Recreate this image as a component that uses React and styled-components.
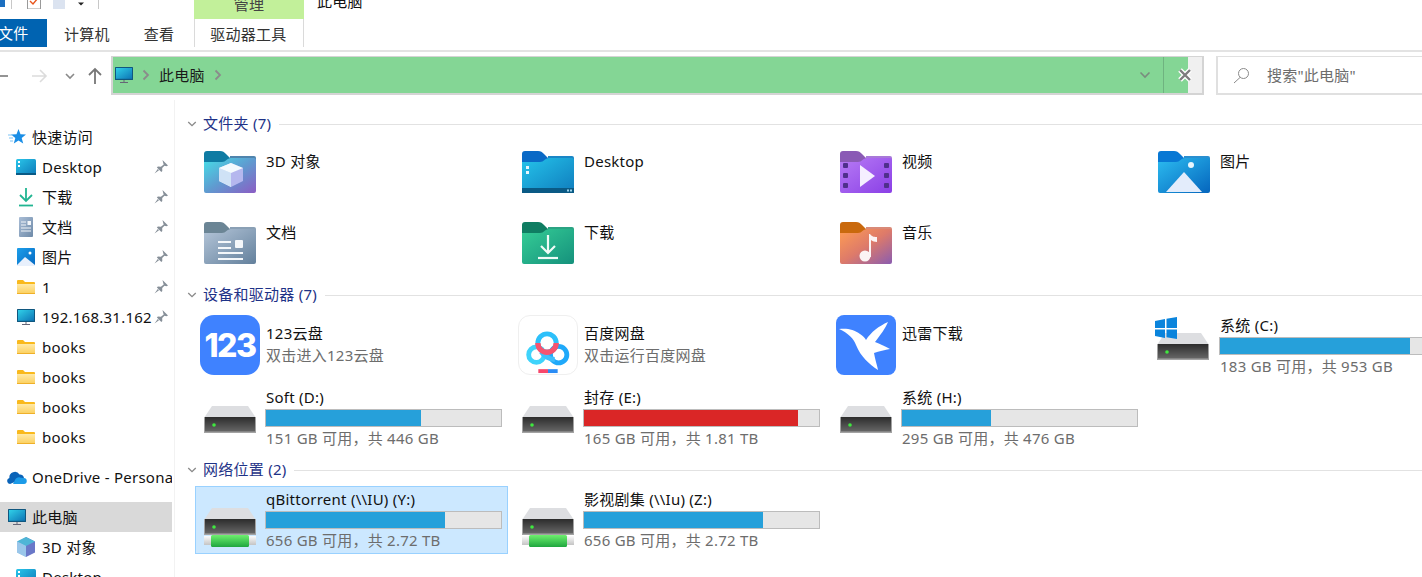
import React from "react";
import styled, { createGlobalStyle } from "styled-components";

const GlobalStyle = createGlobalStyle`
  html, body {
    margin: 0;
    padding: 0;
    background: #fff;
  }
  body {
    font-family: "Noto Sans", "Noto Sans CJK SC", sans-serif;
    font-size: 15px;
    letter-spacing: 0.25px;
    color: #111;
  }
`;

const Window = styled.div`
  width: 1422px;
  height: 577px;
  overflow: hidden;
  display: flex;
  flex-direction: column;
  background: #fff;
`;

/* ribbon */
const Ribbon = styled.div`
  height: 52px;
  flex: none;
  box-sizing: border-box;
  border-bottom: 2px solid #e3e3e3;
  display: flex;
  flex-direction: column;
`;

const TitleRow = styled.div`
  height: 19px;
  display: flex;
  align-items: flex-start;
  overflow: hidden;
`;

const QuickBar = styled.div`
  width: 194px;
  height: 9px;
  display: flex;
  align-items: flex-start;
`;

const ContextHead = styled.div`
  width: 110px;
  height: 19px;
  background: #c2f09a;
  color: #444;
  text-align: center;
  line-height: 20px;
  margin-right: 13px;
`;

const ContextLabel = styled.div`
  margin-top: -6px;
`;

const WindowTitle = styled.div`
  line-height: 20px;
  margin-top: -9px;
`;

const TabRow = styled.div`
  height: 28px;
  display: flex;
`;

const FileTab = styled.div`
  width: 47px;
  background: #0063b1;
  color: #fff;
  line-height: 28px;
  text-indent: -2px;
  overflow: hidden;
`;

const Tab = styled.div`
  padding: 0 17px;
  line-height: 30px;
  color: #333;
`;

const ContextTab = styled(Tab)`
  width: 110px;
  box-sizing: border-box;
  padding: 0 1px 0 0;
  margin-left: 2.5px;
  text-align: center;
  border-left: 1px solid #dadada;
  border-right: 1px solid #dadada;
`;

/* address row */
const AddressRow = styled.div`
  height: 48px;
  flex: none;
  display: flex;
  align-items: flex-start;
  padding-top: 4px;
  box-sizing: border-box;
`;

const NavButtons = styled.div`
  width: 111px;
  height: 39px;
  flex: none;
  display: flex;
  align-items: center;
`;

const AddressBar = styled.div`
  width: 1093px;
  height: 39px;
  flex: none;
  box-sizing: border-box;
  border: 2px solid #d4d4d4;
  border-top-width: 1px;
  background: linear-gradient(to right, #84d695 calc(100% - 14px), #f0f0f0 0);
  display: flex;
  align-items: center;
`;

const CrumbIcon = styled.span`
  display: flex;
  margin: 0 9px 0 2px;
`;

const CrumbText = styled.span`
  margin: 0 9px 2px 9px;
  color: #1a1a1a;
`;

const Spacer = styled.div`
  flex: 1;
`;

const BarDivider = styled.div`
  width: 1px;
  height: 100%;
  margin: 0 13px 0 12px;
  background: #6fb380;
`;

const ClearSlot = styled.span`
  display: flex;
  margin-right: 9px;
`;

const SearchBox = styled.div`
  width: 240px;
  height: 39px;
  flex: none;
  margin-left: 12px;
  box-sizing: border-box;
  border: 2px solid #e0e0e0;
  border-width: 1px 1px 2px 2px;
  display: flex;
  align-items: center;
  padding-left: 15px;
  gap: 17px;
  color: #6d6d6d;
`;

const SearchText = styled.span`
  margin-bottom: 2px;
`;

/* body */
const Body = styled.div`
  flex: 1;
  min-height: 0;
  display: flex;
`;

const Sidebar = styled.nav`
  width: 175px;
  flex: none;
  box-sizing: border-box;
  border-right: 1px solid #f2f2f2;
  padding-top: 22px;
  overflow: hidden;
`;

const NavItem = styled.div`
  height: 30px;
  width: 172px;
  display: flex;
  align-items: center;
  white-space: nowrap;
  overflow: hidden;
  box-sizing: border-box;
  padding-left: ${(p) => (p.$top ? 7 : 16)}px;
  margin-top: ${(p) => p.$gap || 0}px;
  background: ${(p) => (p.$selected ? "#d9d9d9" : "transparent")};
  color: #111;
`;

const NavIcon = styled.span`
  width: 20px;
  height: 20px;
  flex: none;
  margin-right: ${(p) => (p.$top ? 5 : 6)}px;
  display: flex;
  align-items: center;
  justify-content: center;
`;

const NavLabel = styled.span`
  flex: 1;
  min-width: 0;
  margin-bottom: ${(p) => (p.$lift ? 2 : 0)}px;
`;

const PinSlot = styled.span`
  flex: none;
  width: 18px;
  display: flex;
`;

const Content = styled.main`
  flex: 1;
  min-width: 0;
  padding-top: 14px;
`;

const SectionHead = styled.div`
  height: 20px;
  display: flex;
  align-items: center;
  padding-left: 12px;
  color: #1e3287;
  margin-top: ${(p) => p.$gap || 0}px;
`;

const SectionTitle = styled.span`
  margin: 0 8px 4px 6px;
  white-space: nowrap;
`;

const SectionLine = styled.div`
  flex: 1;
  height: 1px;
  background: #e2e2e2;
`;

const TileGrid = styled.div`
  display: grid;
  grid-template-columns: repeat(4, 313px);
  column-gap: 5px;
  grid-auto-rows: ${(p) => p.$rows};
  row-gap: ${(p) => p.$rowGap}px;
  margin: ${(p) => p.$top}px 0 0 20px;
`;

const Tile = styled.div`
  display: flex;
  box-sizing: border-box;
  border: 1px solid ${(p) => (p.$selected ? "#99d1ff" : "transparent")};
  background: ${(p) => (p.$selected ? "#cce8ff" : "transparent")};
`;

const IconSlot = styled.div`
  width: 60px;
  flex: none;
  margin: 0 6px 0 4px;
  display: flex;
  justify-content: center;
  align-items: flex-start;
  padding-top: ${(p) => p.$pad || 0}px;
  box-sizing: border-box;
`;

const TileText = styled.div`
  flex: 1;
  min-width: 0;
  padding-top: ${(p) => p.$pad}px;
  line-height: 20px;
  white-space: nowrap;
`;

const TileSub = styled.div`
  color: #6d6d6d;
  margin-top: ${(p) => p.$gap || 0}px;
`;

const Meter = styled.div`
  width: 237px;
  height: 18px;
  box-sizing: border-box;
  margin: 2px 0 1px -1px;
  border: 1px solid #bcbcbc;
  background: #e6e6e6;
`;

const MeterFill = styled.div`
  height: 100%;
  background: ${(p) => (p.$full ? "#da2626" : "#26a0da")};
`;

const AppBadge = styled.div`
  width: 60px;
  height: 60px;
  box-sizing: border-box;
  border-radius: ${(p) => p.$radius}px;
  background: ${(p) => p.$bg};
  border: ${(p) => (p.$outlined ? "1px solid #efefef" : "none")};
  display: flex;
  align-items: center;
  justify-content: center;
  overflow: hidden;
`;

const BadgeDigits = styled.span`
  font-family: "Inter", "Liberation Sans", sans-serif;
  color: #fff;
  font-size: 32px;
  font-weight: 800;
  letter-spacing: -1.5px;
`;

/* drawings */
const BackArrow = () => (
  <svg width="111" height="39" viewBox="0 0 111 39">
    <path d="M0 20h8" stroke="#7a7a7a" strokeWidth="1.6" fill="none" />
    <path d="M32 20h14M40 14l6 6-6 6" stroke="#dcdcdc" strokeWidth="1.6" fill="none" />
    <path d="M66 18l4 4 4-4" stroke="#8a8a8a" strokeWidth="1.6" fill="none" />
    <path d="M95 28V13M89 19l6-6 6 6" stroke="#777" strokeWidth="1.8" fill="none" />
  </svg>
);

const Chevron = ({ color = "#8b8b8b" }) => (
  <svg width="8" height="12" viewBox="0 0 8 12">
    <path d="M1.5 1.5L6 6l-4.5 4.5" stroke={color} strokeWidth="1.8" fill="none" />
  </svg>
);

const ChevronDown = ({ color = "#7a8b7e", size = 12 }) => (
  <svg width={size} height={size} viewBox="0 0 12 12">
    <path d="M1.5 3.5L6 8l4.5-4.5" stroke={color} strokeWidth="1.6" fill="none" />
  </svg>
);

const ClearIcon = () => (
  <svg width="16" height="16" viewBox="0 0 16 16">
    <path d="M3 3l10 10M13 3L3 13" stroke="#fff" strokeWidth="5" fill="none" />
    <path d="M3 3l10 10M13 3L3 13" stroke="#7d7d7d" strokeWidth="2.4" fill="none" />
  </svg>
);

const SearchIcon = () => (
  <svg width="17" height="17" viewBox="0 0 17 17">
    <circle cx="10.5" cy="6.5" r="5" stroke="#8a8a8a" strokeWidth="1" fill="none" />
    <path d="M7 10.5L1 16" stroke="#8a8a8a" strokeWidth="1" fill="none" />
  </svg>
);

const Pin = () => (
  <svg width="14" height="14" viewBox="0 0 14 14">
    <path
      d="M8.500 0l5.500 5.500-1.500.8-2-.6-2.300 2.300.1 3-1 1-4.400-4.400 1-1 3 .1L9.700 4.400 9 2.200z M3.800 9L.5 13.500 5 10.200z"
      fill="#868f98"
    />
  </svg>
);

const Grad = ({ id, from, to, mid, x2 = 1, y2 = 1 }) => (
  <linearGradient id={id} x1="0" y1="0" x2={x2} y2={y2}>
    <stop offset="0" stopColor={from} />
    {mid && <stop offset="0.5" stopColor={mid} />}
    <stop offset="1" stopColor={to} />
  </linearGradient>
);

const LibFolder = ({ id, tab, edge, from, to, mid, children }) => (
  <svg width="52" height="42" viewBox="0 0 52 42">
    <defs>
      <Grad id={id} from={from} to={to} mid={mid} />
    </defs>
    <path d="M0 3a3 3 0 0 1 3-3h13c3 0 4 1 6 3l4 4v8H0z" fill={tab} />
    <path d="M26 5h24a2 2 0 0 1 2 2v6H26z" fill={edge} />
    <path
      d="M0 11h18c4 0 5-4 9-4h23a2 2 0 0 1 2 2v31a2 2 0 0 1-2 2H2a2 2 0 0 1-2-2z"
      fill={`url(#${id})`}
    />
    {children}
  </svg>
);

const Folder3D = () => (
  <LibFolder id="f3d" tab="#0f7ba3" edge="#4f84ad" from="#45dfe8" mid="#5f9bd0" to="#8c5cc4">
    <path d="M27 12l-12 5v13l12 6z" fill="#dbe9f8" />
    <path d="M27 12l12 5v13l-12 6z" fill="#b5b7ee" />
    <path d="M15 17l12-5 12 5-12 5z" fill="#f4fafe" />
    <path d="M15 17l12 5v14l-12-6z" fill="#cfe2f6" />
  </LibFolder>
);

const FolderDesktop = () => (
  <LibFolder id="fdt" tab="#0a69c6" edge="#1a86c6" from="#25c3ea" to="#0f7cbd">
    <rect y="37" width="52" height="5" fill="#0a5a85" />
    <rect x="4" y="15" width="3" height="3" fill="#e8f6fd" />
    <rect x="4" y="20" width="3" height="3" fill="#e8f6fd" />
    <rect x="45" y="38.5" width="2" height="2" fill="#9ed4ec" />
    <rect x="48" y="38.5" width="2" height="2" fill="#9ed4ec" />
  </LibFolder>
);

const FolderVideo = () => (
  <LibFolder id="fvd" tab="#8a5ab5" edge="#a879d8" from="#b77bf5" to="#8a3fe6">
    {[14, 24, 34].map((y) => (
      <React.Fragment key={y}>
        <rect x="3" y={y - 2} width="5" height="5" rx="1" fill="#4f2f8c" />
        <rect x="44" y={y - 2} width="5" height="5" rx="1" fill="#4f2f8c" />
      </React.Fragment>
    ))}
    <path d="M20 14l15 11-15 11z" fill="#f5efff" />
  </LibFolder>
);

const FolderPicture = () => (
  <LibFolder id="fpc" tab="#0878d4" edge="#2a8fd0" from="#2cbcf0" to="#0565bd">
    <circle cx="33" cy="14" r="3" fill="#e9f6fd" />
    <path d="M8 41l18-20 18 20z" fill="#e3ecfb" />
  </LibFolder>
);

const FolderDocs = () => (
  <LibFolder id="fdc" tab="#6b8595" edge="#8aa0b5" from="#b4c5d8" to="#63809c">
    <rect x="14" y="19" width="13" height="2" fill="#f4f7fa" />
    <rect x="14" y="25" width="13" height="2" fill="#f4f7fa" />
    <rect x="31" y="18" width="8" height="8" rx="1" fill="#f4f7fa" />
    <rect x="14" y="30" width="25" height="2" fill="#f4f7fa" />
    <rect x="14" y="36" width="25" height="2" fill="#f4f7fa" />
  </LibFolder>
);

const FolderDownload = () => (
  <LibFolder id="fdl" tab="#0f7d62" edge="#2ba383" from="#35cd96" to="#15917c">
    <path d="M26 13v18M19 24l7 7 7-7" stroke="#f0fbf7" strokeWidth="2.2" fill="none" />
    <path d="M16 36h20" stroke="#f0fbf7" strokeWidth="2.2" />
  </LibFolder>
);

const FolderMusic = () => (
  <LibFolder id="fms" tab="#c9690d" edge="#d98a78" from="#ff9d52" mid="#dd7a6a" to="#8a5cb0">
    <path d="M29 12h1c2 3 5 3 7 3v5c-2 0-5-1-6-2v17h-2z" fill="#fbf4f4" />
    <circle cx="25" cy="34" r="5.5" fill="#fbf4f4" />
  </LibFolder>
);

const DriveBody = ({ id }) => (
  <g>
    <defs>
      <Grad id={id} from="#2c2c2c" to="#6c6c6c" x2={0} />
    </defs>
    <path d="M8 0h36l8 12H0z" fill="#dddee1" />
    <rect y="11" width="52" height="16" fill={`url(#${id})`} />
    <rect y="25.5" width="52" height="1.5" fill="#a3a3a3" />
    <rect y="11" width="1" height="16" fill="#a3a3a3" />
    <rect x="51" y="11" width="1" height="16" fill="#a3a3a3" />
    <circle cx="10" cy="19" r="1.8" fill="#3fe83f" />
  </g>
);

const DriveIcon = ({ id }) => (
  <svg width="52" height="28" viewBox="0 0 52 28">
    <DriveBody id={id} />
  </svg>
);

const SystemDrive = () => (
  <svg width="60" height="44" viewBox="0 0 60 44">
    <g transform="translate(3 16)">
      <DriveBody id="sysd" />
    </g>
    <path
      d="M1 4l10-2v9H1zM12.5 1.700L23 0v11H12.500zM1 12.500h10v8.500l-10-2zM12.500 12.500H23V22l-10.500-1.800z"
      fill="#0a84dc"
    />
  </svg>
);

const NetworkDrive = ({ id }) => (
  <svg width="52" height="40" viewBox="0 0 52 40">
    <DriveBody id={id} />
    <defs>
      <Grad id={`${id}g`} from="#6ef06e" to="#1fa63f" x2={0} />
      <Grad id={`${id}w`} from="#fbfbfb" to="#c4c4c4" x2={0} />
    </defs>
    <rect y="28" width="52" height="9" fill={`url(#${id}w)`} />
    <rect x="7" y="27" width="38" height="12" rx="1.5" fill={`url(#${id}g)`} />
  </svg>
);

const BaiduLogo = () => (
  <svg width="58" height="58" viewBox="0 0 60 60">
    <circle cx="18" cy="40" r="8" stroke="#3fd3fb" strokeWidth="5" fill="none" />
    <circle cx="41" cy="40" r="8.5" stroke="#1fa9fa" strokeWidth="5" fill="none" />
    <path d="M23 37c3 5 9 8 14 8" stroke="#3fbffb" strokeWidth="5" fill="none" />
    <circle cx="29" cy="28" r="9.5" stroke="#2dc0fa" strokeWidth="5" fill="none" />
    <path d="M19.500 28a9.500 9.500 0 0 0 19 0" stroke="#f7536f" strokeWidth="5.5" fill="none" />
    <rect x="20" y="55" width="10" height="4" fill="#f7476b" />
    <rect x="30" y="55" width="10" height="4" fill="#2a8cf5" />
  </svg>
);

const XunleiBird = () => (
  <svg width="60" height="60" viewBox="0 0 60 60">
    <path
      d="M3 14C10 13 18 14 24 19c3 2 5 4 6 6C35 17 43 11 52 7c-3 7-7 12-13 20 5 2 10 4 15 7-5 1-11 2-16 4 1 6 3 12 4 17C33 49 25 42 20 30 18 24 12 18 3 14z"
      fill="#fff"
    />
  </svg>
);

const NavDesktop = () => (
  <svg width="20" height="16" viewBox="0 0 20 16">
    <defs>
      <Grad id="ndt" from="#2ac6ea" to="#0d79b8" />
    </defs>
    <rect width="20" height="16" rx="1.5" fill="url(#ndt)" />
    <rect x="2" y="2" width="2" height="2" fill="#fff" />
    <rect x="2" y="6" width="2" height="2" fill="#fff" />
    <rect y="14" width="20" height="2" fill="#0a5a85" />
  </svg>
);

const NavDownload = () => (
  <svg width="16" height="20" viewBox="0 0 16 20">
    <path d="M8 1v13M2 8l6 6 6-6" stroke="#22b592" strokeWidth="1.8" fill="none" />
    <path d="M1 18.500h14" stroke="#22b592" strokeWidth="1.8" />
  </svg>
);

const NavDoc = () => (
  <svg width="14" height="20" viewBox="0 0 14 20">
    <defs>
      <Grad id="ndc" from="#a9bdd6" to="#6e8aa8" />
    </defs>
    <rect width="14" height="20" rx="1" fill="url(#ndc)" />
    <path d="M2 5h5M2 8h5M2 11h10M2 14h10" stroke="#f2f5f9" strokeWidth="1.2" />
    <rect x="8.5" y="4" width="3.5" height="4" fill="#f2f5f9" />
  </svg>
);

const NavPicture = () => (
  <svg width="18" height="18" viewBox="0 0 18 18">
    <defs>
      <Grad id="npc" from="#1c9eea" to="#0569c2" />
    </defs>
    <rect width="18" height="18" rx="1" fill="url(#npc)" />
    <circle cx="13" cy="5" r="1.5" fill="#fff" />
    <path d="M0 17l8-8 10 8v1H0z" fill="#e8f0fc" />
  </svg>
);

const NavFolder = () => (
  <svg width="18" height="14" viewBox="0 0 18 14">
    <defs>
      <Grad id="nfl" from="#ffe9a6" to="#fbcf5c" x2={0} />
    </defs>
    <path d="M0 1a1 1 0 0 1 1-1h5l2 2h9a1 1 0 0 1 1 1v2H0z" fill="#f9b91c" />
    <path d="M0 4h18v9a1 1 0 0 1-1 1H1a1 1 0 0 1-1-1z" fill="url(#nfl)" />
    <rect y="13" width="18" height="1" fill="#efb02a" />
  </svg>
);

const Monitor = ({ id = "mon" }) => (
  <svg width="18" height="16" viewBox="0 0 18 16">
    <defs>
      <Grad id={id} from="#30d0e8" to="#0d74b5" />
    </defs>
    <rect width="18" height="13" rx="0.5" fill="#10577f" />
    <rect x="1" y="1" width="16" height="10.8" fill={`url(#${id})`} />
    <path d="M8.500 13h1v2h-1z" fill="#667" />
    <path d="M5 15h8v1H5z" fill="#667" />
  </svg>
);

const QuickStar = () => (
  <svg width="18" height="16" viewBox="0 0 18 16">
    <path d="M10.500 0l2 5.200 5.500.3-4.300 3.500 1.500 5.500-4.700-3-4.700 3 1.500-5.500L3 5.500l5.500-.3z" fill="#1a8ee6" />
    <path d="M0 6h5M1 9h4M2 12h3" stroke="#7dc4f5" strokeWidth="1.2" />
  </svg>
);

const Cloud = () => (
  <svg width="20" height="14" viewBox="0 0 20 14">
    <path d="M3 14a3 3 0 0 1-.6-5.900A5.500 5.500 0 0 1 12.500 4.500 4 4 0 0 1 17 8z" fill="#0a63b8" />
    <path d="M6 14l2-4c1-2 3-3 5-2.500 1 .3 2 .3 3.500.5A3 3 0 0 1 17 14z" fill="#1c9be8" />
  </svg>
);

const NavCube = () => (
  <svg width="20" height="20" viewBox="0 0 20 20">
    <path d="M10 0l9 4.500v11L10 20z" fill="#6a78c8" />
    <path d="M10 0L1 4.500v11L10 20z" fill="#8fc4e4" />
    <path d="M1 4.500L10 0l9 4.500L10 9z" fill="#4fb5d6" />
    <path d="M1 4.500L10 9v11l-9-4.500z" fill="#9ac6ea" />
  </svg>
);

const QuickTools = () => (
  <svg width="100" height="9" viewBox="0 0 100 9">
    <rect x="-4" y="-4" width="9" height="11" fill="#1c6fc0" />
    <rect x="11" y="0" width="1" height="9" fill="#c8c8c8" />
    <rect x="27.5" y="-3" width="13" height="12" fill="#fff" stroke="#9a9a9a" />
    <path d="M30 1l3 3 5-6" stroke="#e8541c" strokeWidth="1.4" fill="none" />
    <path d="M53-2h12v11H53z" fill="#dbe3f0" />
    <path d="M78 2.500h6l-3 3z" fill="#222" />
    <rect x="98" y="0" width="1" height="9" fill="#c8c8c8" />
  </svg>
);

const navItems = [
  { label: "快速访问", icon: <QuickStar />, top: true, lift: true },
  { label: "Desktop", icon: <NavDesktop />, pin: true },
  { label: "下载", icon: <NavDownload />, pin: true, lift: true },
  { label: "文档", icon: <NavDoc />, pin: true, lift: true },
  { label: "图片", icon: <NavPicture />, pin: true, lift: true },
  { label: "1", icon: <NavFolder />, pin: true },
  { label: "192.168.31.162", icon: <Monitor id="mon2" />, pin: true },
  { label: "books", icon: <NavFolder /> },
  { label: "books", icon: <NavFolder /> },
  { label: "books", icon: <NavFolder /> },
  { label: "books", icon: <NavFolder /> },
  { label: "OneDrive - Personal", icon: <Cloud />, top: true, gap: 10 },
  { label: "此电脑", icon: <Monitor id="mon3" />, top: true, gap: 10, selected: true, lift: true },
  { label: "3D 对象", icon: <NavCube />, lift: true },
  { label: "Desktop", icon: <NavDesktop /> },
];

const folders = [
  { name: "3D 对象", icon: <Folder3D /> },
  { name: "Desktop", icon: <FolderDesktop /> },
  { name: "视频", icon: <FolderVideo /> },
  { name: "图片", icon: <FolderPicture /> },
  { name: "文档", icon: <FolderDocs /> },
  { name: "下载", icon: <FolderDownload /> },
  { name: "音乐", icon: <FolderMusic /> },
];

const SectionHeader = ({ title, gap }) => (
  <SectionHead $gap={gap}>
    <ChevronDown color="#8a8a8a" size={10} />
    <SectionTitle>{title}</SectionTitle>
    <SectionLine />
  </SectionHead>
);

const DriveTile = ({ name, free, used, full, selected, icon, iconPad = 21 }) => (
  <Tile $selected={selected}>
    <IconSlot $pad={iconPad}>{icon}</IconSlot>
    <TileText $pad={2}>
      {name}
      <Meter>
        <MeterFill $full={full} style={{ width: `${used}%` }} />
      </Meter>
      <TileSub>{free}</TileSub>
    </TileText>
  </Tile>
);

const AppTile = ({ name, sub, icon }) => (
  <Tile>
    <IconSlot $pad={2}>{icon}</IconSlot>
    <TileText $pad={10}>
      {name}
      {sub && <TileSub $gap={2}>{sub}</TileSub>}
    </TileText>
  </Tile>
);

export default function App() {
  return (
    <Window>
      <GlobalStyle />
      <Ribbon>
        <TitleRow>
          <QuickBar>
            <QuickTools />
          </QuickBar>
          <ContextHead>
            <ContextLabel>管理</ContextLabel>
          </ContextHead>
          <WindowTitle>此电脑</WindowTitle>
        </TitleRow>
        <TabRow>
          <FileTab>文件</FileTab>
          <Tab>计算机</Tab>
          <Tab>查看</Tab>
          <ContextTab>驱动器工具</ContextTab>
        </TabRow>
      </Ribbon>

      <AddressRow>
        <NavButtons>
          <BackArrow />
        </NavButtons>
        <AddressBar>
          <CrumbIcon>
            <Monitor />
          </CrumbIcon>
          <Chevron />
          <CrumbText>此电脑</CrumbText>
          <Chevron />
          <Spacer />
          <ChevronDown />
          <BarDivider />
          <ClearSlot>
            <ClearIcon />
          </ClearSlot>
        </AddressBar>
        <SearchBox>
          <SearchIcon />
          <SearchText>搜索"此电脑"</SearchText>
        </SearchBox>
      </AddressRow>

      <Body>
        <Sidebar>
          {navItems.map((item, i) => (
            <NavItem key={i} $top={item.top} $gap={item.gap} $selected={item.selected}>
              <NavIcon $top={item.top}>{item.icon}</NavIcon>
              <NavLabel $lift={item.lift}>{item.label}</NavLabel>
              {item.pin && (
                <PinSlot>
                  <Pin />
                </PinSlot>
              )}
            </NavItem>
          ))}
        </Sidebar>

        <Content>
          <SectionHeader title="文件夹 (7)" />
          <TileGrid $rows="68px" $rowGap={3} $top={12}>
            {folders.map((f) => (
              <Tile key={f.name}>
                <IconSlot $pad={4}>{f.icon}</IconSlot>
                <TileText $pad={4}>{f.name}</TileText>
              </Tile>
            ))}
          </TileGrid>

          <SectionHeader title="设备和驱动器 (7)" />
          <TileGrid $rows="70px 68px" $rowGap={2} $top={7}>
            <AppTile
              name="123云盘"
              sub="双击进入123云盘"
              icon={
                <AppBadge $bg="#3f82ff" $radius={14}>
                  <BadgeDigits>123</BadgeDigits>
                </AppBadge>
              }
            />
            <AppTile
              name="百度网盘"
              sub="双击运行百度网盘"
              icon={
                <AppBadge $bg="#fff" $radius={12} $outlined>
                  <BaiduLogo />
                </AppBadge>
              }
            />
            <AppTile
              name="迅雷下载"
              icon={
                <AppBadge $bg="#3f82ff" $radius={8}>
                  <XunleiBird />
                </AppBadge>
              }
            />
            <DriveTile name="系统 (C:)" free="183 GB 可用，共 953 GB" used={81} iconPad={4} icon={<SystemDrive />} />
            <DriveTile name="Soft (D:)" free="151 GB 可用，共 446 GB" used={66} icon={<DriveIcon id="dd" />} />
            <DriveTile name="封存 (E:)" free="165 GB 可用，共 1.81 TB" used={91} full icon={<DriveIcon id="de" />} />
            <DriveTile name="系统 (H:)" free="295 GB 可用，共 476 GB" used={38} icon={<DriveIcon id="dh" />} />
          </TileGrid>

          <SectionHeader title="网络位置 (2)" gap={8} />
          <TileGrid $rows="68px" $rowGap={0} $top={6}>
            <DriveTile name="qBittorrent (\\IU) (Y:)" free="656 GB 可用，共 2.72 TB" used={76} selected icon={<NetworkDrive id="ny" />} />
            <DriveTile name="影视剧集 (\\Iu) (Z:)" free="656 GB 可用，共 2.72 TB" used={76} icon={<NetworkDrive id="nz" />} />
          </TileGrid>
        </Content>
      </Body>
    </Window>
  );
}
